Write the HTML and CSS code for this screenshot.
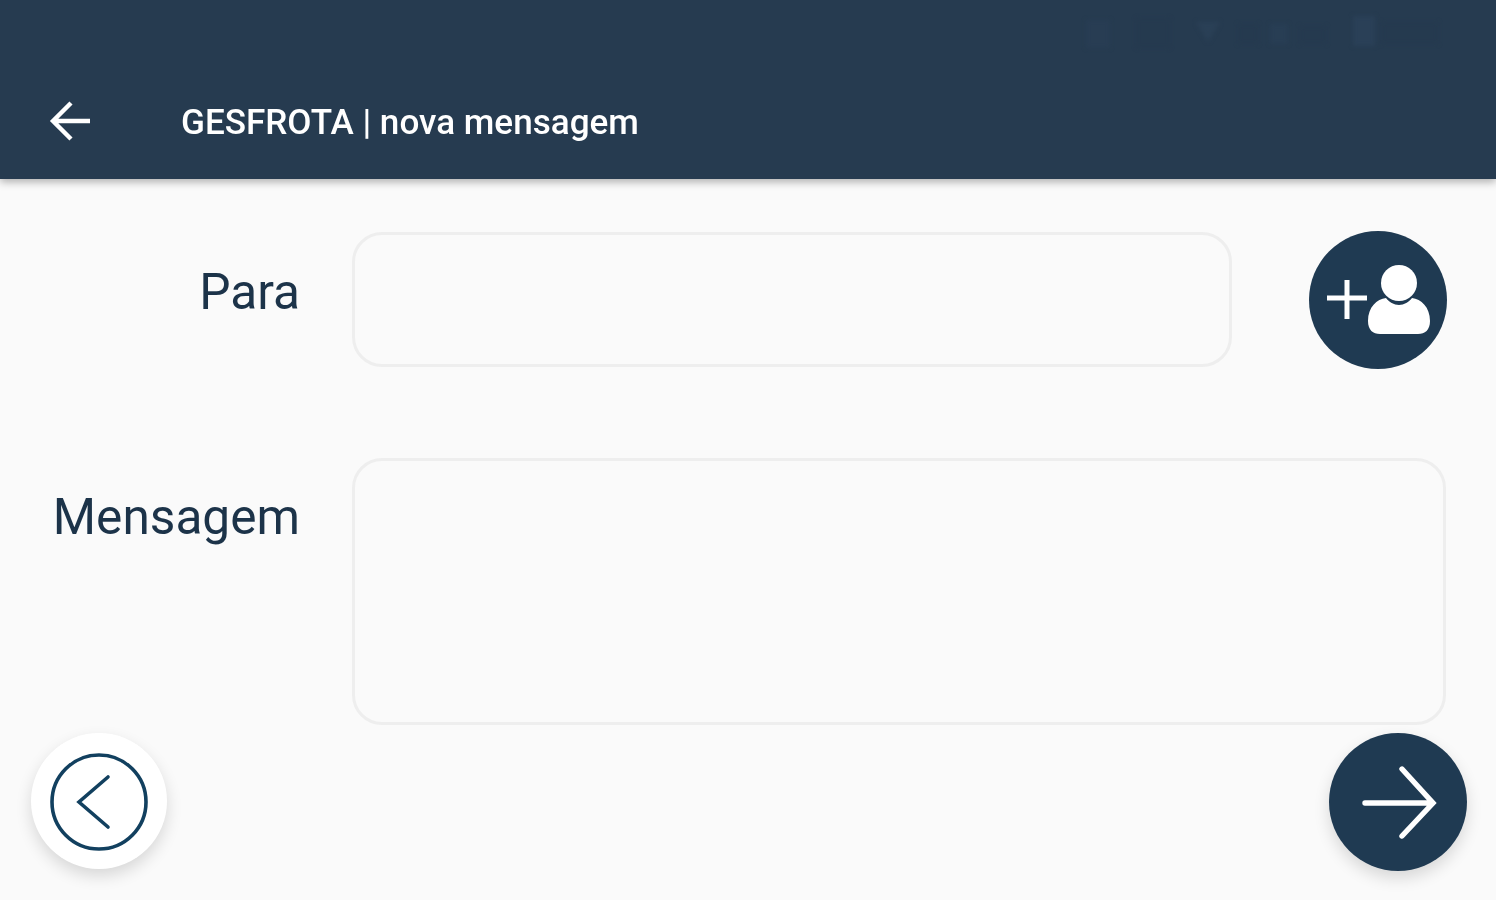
FILE: index.html
```html
<!DOCTYPE html>
<html lang="pt">
<head>
<meta charset="utf-8">
<title>GESFROTA | nova mensagem</title>
<link rel="stylesheet" href="styles.css">
</head>
<body>
<div class="screen">
  <header class="appbar">
    <div class="status">
      <svg class="status-icons" width="370" height="36" viewBox="0 0 370 36" aria-hidden="true">
        <rect x="0" y="6" width="24" height="28" fill="#283d53"/>
        <rect x="50" y="4" width="34" height="30" rx="3" fill="#253a4f"/>
        <path d="M110 8h24l-12 20z" fill="#2a4056"/>
        <rect x="152" y="10" width="20" height="20" fill="#253a4f"/>
        <rect x="184" y="10" width="18" height="20" fill="#283e54"/>
        <rect x="214" y="12" width="26" height="18" fill="#253a4f"/>
        <rect x="267" y="2" width="22" height="30" fill="#2a4057"/>
        <rect x="296" y="8" width="56" height="22" fill="#253a4f"/>
      </svg>
    </div>
    <div class="toolbar">
      <button class="back-link" type="button" aria-label="Voltar">
        <svg width="44" height="44" viewBox="0 0 44 44"><path d="M41 22H5M22 4 4 22l18 18" fill="none" stroke="#fff" stroke-width="4.4"/></svg>
      </button>
      <h1 class="title">GESFROTA | nova mensagem</h1>
    </div>
  </header>
  <main class="form">
    <div class="row row-to">
      <label class="label label-to" for="para">Para</label>
      <input class="field field-to" id="para" type="text">
      <button class="round dark add" type="button" aria-label="Adicionar destinatário">
        <svg width="138" height="138" viewBox="0 0 138 138">
          <path d="M18 67h40M38 49v39" fill="none" stroke="#fff" stroke-width="5"/>
          <circle cx="90" cy="52" r="18" fill="#fff"/>
          <path d="M59 90c0-14 9-22 18-23 3 4 8 7 13 7s10-3 13-7c9 1 18 9 18 23 0 9-5 13-12 13H71c-7 0-12-4-12-13z" fill="#fff"/>
        </svg>
      </button>
    </div>
    <div class="row row-msg">
      <label class="label" for="mensagem">Mensagem</label>
      <textarea class="field field-msg" id="mensagem"></textarea>
    </div>
    <div class="actions">
      <button class="round light" type="button" aria-label="Anterior">
        <svg width="136" height="136" viewBox="0 0 136 136">
          <circle cx="68" cy="69" r="47" fill="none" stroke="#12405f" stroke-width="3.6"/>
          <path d="M77 44 48 69l29 25" fill="none" stroke="#12405f" stroke-width="3.6" stroke-linecap="round"/>
        </svg>
      </button>
      <button class="round dark" type="button" aria-label="Seguinte">
        <svg width="138" height="138" viewBox="0 0 138 138">
          <path d="M36 70h67M73 36l31 34-31 33" fill="none" stroke="#fff" stroke-width="5.4" stroke-linecap="round"/>
        </svg>
      </button>
    </div>
  </main>
</div>
</body>
</html>
```

FILE: styles.css
```css
* { box-sizing: border-box; }
html, body { margin: 0; height: 100%; }
body {
  background: #fafafa;
  font-family: Roboto, "Liberation Sans", sans-serif;
  overflow: hidden;
}
.screen { height: 900px; display: flex; flex-direction: column; }
.appbar {
  height: 179px;
  background: #263b50;
  box-shadow: 0 3px 8px rgba(0, 0, 0, 0.3);
  display: flex;
  flex-direction: column;
  flex: none;
}
.status { height: 82px; display: flex; justify-content: flex-end; padding: 14px 40px 0 0; filter: blur(2px); }
.toolbar { display: flex; align-items: center; height: 78px; padding-left: 49px; }
.back-link { background: none; border: 0; padding: 0; width: 44px; height: 44px; margin-right: 88px; filter: blur(0.6px); }
.back-link svg { display: block; }
.title {
  margin: 2px 0 0;
  color: #fff;
  font-size: 35.1px;
  font-weight: 500;
  filter: blur(0.5px);
}
.form { flex: 1; display: flex; flex-direction: column; padding-top: 52px; }
.row { display: flex; align-items: flex-start; }
.row-to { height: 227px; }
.label {
  width: 300px;
  flex: none;
  text-align: right;
  color: #1c3349;
  font-size: 49.6px;
  line-height: 54px;
  padding-top: 32px;
  filter: blur(0.5px);
}
.label-to { padding-top: 34px; }
.field {
  display: block;
  margin: 0 0 0 52px;
  background: #fafafa;
  border: 3px solid #eeeeee;
  border-radius: 30px;
  outline: none;
  resize: none;
  filter: blur(0.6px);
}
.field-to { width: 880px; height: 135px; margin-top: 1px; }
.field-msg { width: 1094px; height: 267px; }
.round {
  display: block;
  border: 0;
  padding: 0;
  border-radius: 50%;
  flex: none;
  filter: blur(0.5px);
}
.round svg { display: block; }
.dark { width: 138px; height: 138px; background: #1f3a52; }
.light { width: 136px; height: 136px; background: #fff; }
.add { margin-left: 77px; }
.actions {
  display: flex;
  justify-content: space-between;
  align-items: flex-start;
  margin-top: 8px;
  padding: 0 29px 0 31px;
}
.actions .round { box-shadow: 0 7px 16px rgba(0, 0, 0, 0.14); }
.row-msg { height: 267px; }
```
